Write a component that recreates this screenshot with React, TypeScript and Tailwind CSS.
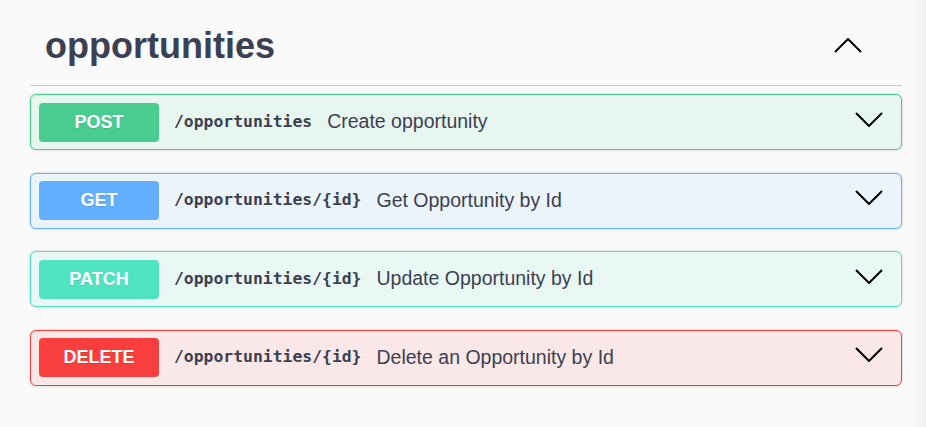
const ops = [
	{
		method: "POST",
		path: "/opportunities",
		summary: "Create opportunity",
		badge: "bg-[#49cc90]",
		block: "bg-[#e8f6f0] border-[#49cc90]",
	},
	{
		method: "GET",
		path: "/opportunities/{id}",
		summary: "Get Opportunity by Id",
		badge: "bg-[#61affe]",
		block: "bg-[#ebf3fb] border-[#61affe]",
	},
	{
		method: "PATCH",
		path: "/opportunities/{id}",
		summary: "Update Opportunity by Id",
		badge: "bg-[#50e3c2]",
		block: "bg-[#e9f8f4] border-[#50e3c2]",
	},
	{
		method: "DELETE",
		path: "/opportunities/{id}",
		summary: "Delete an Opportunity by Id",
		badge: "bg-[#f93e3e]",
		block: "bg-[#fae7e7] border-[#f93e3e]",
	},
]

const Chevron = ({ up, className }: { up?: boolean; className?: string }) => (
	<svg width="28" height="15" viewBox="0 0 28 15" fill="none" className={className}>
		<path
			d={up ? "M1 14 L14 1 L27 14" : "M1 1 L14 14 L27 1"}
			stroke="#000"
			strokeWidth="2"
		/>
	</svg>
)

const OpBlock = ({ op }: { op: (typeof ops)[number] }) => {
	return (
		<div className={`h-[56px] flex items-center border rounded-[6px] shadow-[0_0_3px_rgba(0,0,0,0.19)] pl-[8px] pr-[18px] ${op.block}`}>
			<span
				className={`w-[120px] h-[39px] flex items-center justify-center rounded-[4px] text-white font-bold text-[18px] [text-shadow:0_1px_0_rgba(0,0,0,0.1)] ${op.badge}`}
				style={{ fontFamily: '"Liberation Sans", Arial, sans-serif' }}
			>
				{op.method}
			</span>
			<span
				className="ml-[15px] text-[16.4px] font-bold text-[#3b4151]"
				style={{ fontFamily: '"DejaVu Sans Mono", monospace' }}
			>
				{op.path}
			</span>
			<span
				className="ml-[15px] text-[19.5px] text-[#3b4151] flex-1"
				style={{ fontFamily: '"Liberation Sans", Arial, sans-serif' }}
			>
				{op.summary}
			</span>
			<Chevron className="mb-[6px]" />
		</div>
	)
}

export default function App() {
	return (
		<div className="w-[926px] h-[427px] flex bg-[#fafafa] overflow-hidden">
			<div className="flex-1 pl-[30px] pr-[10px]">
				<div className="flex items-center justify-between pl-[15px] pr-[40px] pt-[24px] pb-[18px] border-b border-[#c8c9cc]">
					<h4
						className="text-[36px] leading-[43px] font-bold text-[#3b4151]"
						style={{ fontFamily: '"Liberation Sans", Arial, sans-serif' }}
					>
						opportunities
					</h4>
					<Chevron up />
				</div>
				<div className="mt-[8px] flex flex-col gap-[22.5px]">
					{ops.map((op) => (
						<OpBlock key={op.method} op={op} />
					))}
				</div>
			</div>
			<div className="w-[14px] bg-gradient-to-r from-[#fafafa] to-[#f0f0f0]" />
		</div>
	)
}
